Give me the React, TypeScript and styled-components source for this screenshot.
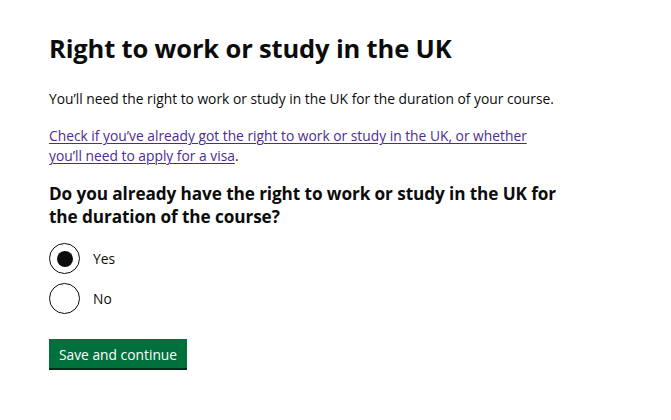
import React from "react";
import styled, { createGlobalStyle } from "styled-components";

const GlobalStyle = createGlobalStyle`
  html, body { margin: 0; padding: 0; background: #ffffff; }
  body {
    font-family: "Open Sans", "Noto Sans", Arial, sans-serif;
    color: #0b0c0c;
    -webkit-font-smoothing: antialiased;
  }
`;

const Main = styled.main`
  padding: 33px 0 40px 49px;
  width: 511px;
`;

const Heading = styled.h1`
  margin: 0 0 26px;
  font-size: 25.5px;
  line-height: 30px;
  font-weight: 700;
  letter-spacing: -0.15px;
`;

const Body = styled.p<{ $gap?: number }>`
  margin: 0 0 ${(p) => p.$gap ?? 17}px;
  font-size: 13.8px;
  line-height: 20px;
  font-weight: 400;
`;

const Link = styled.a`
  color: #4c2c92;
  text-decoration: underline;
  text-underline-offset: 2px;
  text-decoration-thickness: 1px;
`;

const Fieldset = styled.fieldset`
  margin: 0 0 25px;
  padding: 0;
  border: 0;
  min-width: 0;
`;

const Legend = styled.legend`
  padding: 0;
  margin: 0 0 15px;
  font-size: 17.2px;
  line-height: 23px;
  font-weight: 700;
  letter-spacing: -0.1px;
`;

const Radios = styled.div`
  display: flex;
  flex-direction: column;
  gap: 9px;
`;

const RadioItem = styled.label`
  display: flex;
  align-items: center;
  gap: 13px;
  font-size: 13.8px;
  line-height: 20px;
  cursor: pointer;
`;

const Circle = styled.span<{ $checked?: boolean }>`
  box-sizing: border-box;
  width: 31px;
  height: 31px;
  border: 1.5px solid #0b0c0c;
  border-radius: 50%;
  display: flex;
  align-items: center;
  justify-content: center;
  flex: none;
  &::after {
    content: "";
    width: 16px;
    height: 16px;
    border-radius: 50%;
    background: #0b0c0c;
    display: ${(p) => (p.$checked ? "block" : "none")};
  }
`;

const Button = styled.button`
  box-sizing: border-box;
  display: inline-flex;
  align-items: center;
  height: 29px;
  padding: 2px 10px 0;
  border: 0;
  border-radius: 0;
  background: #00703c;
  color: #ffffff;
  font-family: inherit;
  font-size: 13.8px;
  line-height: 20px;
  box-shadow: 0 2px 0 #002d18;
  cursor: pointer;
`;

export default function App() {
  return (
    <>
      <GlobalStyle />
      <Main>
        <Heading>Right to work or study in the UK</Heading>
        <Body>You’ll need the right to work or study in the UK for the duration of your course.</Body>
        <Body $gap={16}>
          <Link href="#">
            Check if you’ve already got the right to work or study in the UK, or whether you’ll need to apply for a visa
          </Link>
          .
        </Body>
        <Fieldset>
          <Legend>Do you already have the right to work or study in the UK for the duration of the course?</Legend>
          <Radios>
            <RadioItem>
              <Circle $checked />
              Yes
            </RadioItem>
            <RadioItem>
              <Circle />
              No
            </RadioItem>
          </Radios>
        </Fieldset>
        <Button type="button">Save and continue</Button>
      </Main>
    </>
  );
}
